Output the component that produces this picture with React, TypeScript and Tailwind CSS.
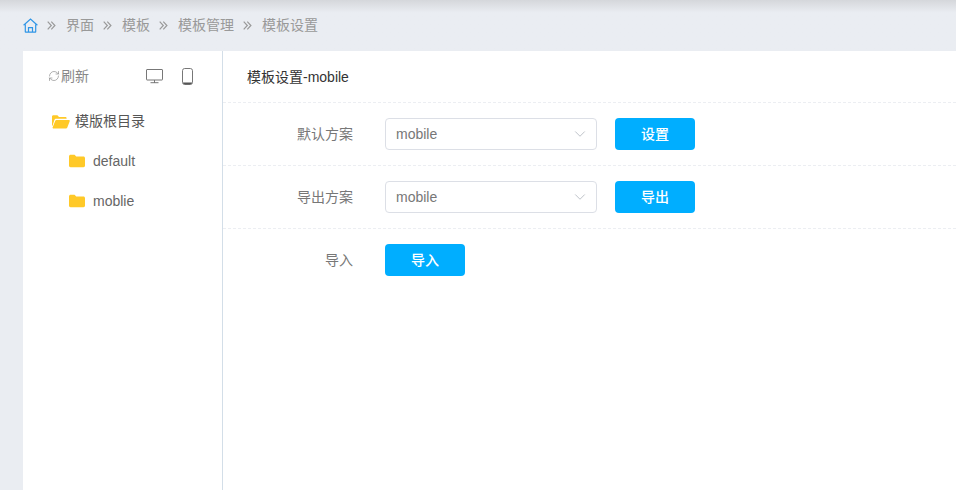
import { ChevronDown, RefreshCw } from 'lucide-react';

const crumbs = ['界面', '模板', '模板管理', '模板设置'];

function HomeIcon() {
  return (
    <svg width="15" height="15" viewBox="0 0 15 15" fill="none" stroke="#2f95e6" strokeWidth="1.200">
      <path d="M.6 7.200 7.500 1l6.900 6.200" />
      <path d="M2.300 6.200v7.600c0 .2.100.4.400.4h9.600c.3 0 .4-.2.400-.4V6.200" />
      <path d="M5.500 14V9.600h4V14" />
    </svg>
  );
}

function CrumbArrow() {
  return (
    <svg width="9" height="9" viewBox="0 0 9 9" fill="none" stroke="#999" strokeWidth="1.200" className="ml-[9px] mr-[10px]">
      <path d="M.7.7 4.300 4.500.7 8.300M4.300.7 7.900 4.500 4.300 8.300" />
    </svg>
  );
}

function FolderIcon() {
  return (
    <svg width="16" height="14" viewBox="0 0 16 14">
      <path d="M0 2.500C0 1.400.8.8 1.600.8h4l1.600 1.800h7.200c.9 0 1.600.7 1.600 1.600v7.400c0 .9-.7 1.600-1.600 1.600H1.600C.7 13.200 0 12.500 0 11.600z" fill="#ffc928" />
    </svg>
  );
}

function OpenFolderIcon() {
  return (
    <svg width="18" height="14" viewBox="0 0 18 14">
      <path d="M0 1.600C0 .8.600.2 1.400.2h4l1.600 1.800h6.400c.7 0 1.200.5 1.200 1.200v.6H4.200c-.9 0-1.500.5-1.800 1.200L.6 10.600 0 11z" fill="#ffc928" />
      <path d="M4.400 5h12.400c.7 0 1.100.6.900 1.200l-2.400 6.200c-.2.6-.7 1-1.400 1H1.200c-.5 0-.8-.4-.6-.9l2.600-6.500C3.400 5.400 3.900 5 4.400 5z" fill="#ffc928" />
    </svg>
  );
}

function MonitorIcon() {
  return (
    <svg width="17" height="15" viewBox="0 0 17 15" fill="none" stroke="#777" strokeWidth="1">
      <rect x="0.500" y="0.500" width="16" height="10.500" rx="0.500" />
      <path d="M8.500 11v3M4.500 13.700h8" />
    </svg>
  );
}

function PhoneIcon() {
  return (
    <svg width="11" height="17" viewBox="0 0 11 17" fill="none">
      <rect x="0.500" y="0.500" width="10" height="16" rx="2.200" stroke="#777" strokeWidth="1" />
      <path d="M1 14.600h9c0 .9-.7 1.600-1.500 1.600h-6c-.8 0-1.500-.7-1.500-1.600z" fill="#555" />
    </svg>
  );
}

function Row({ label, action, select }: { label: string; action: string; select?: boolean }) {
  return (
    <div className="flex h-[63px] items-center border-b border-dashed border-[#eceef2] pl-[24px] last:border-transparent">
      <div className="w-[106px] text-right text-[14px] text-[#777]">{label}</div>
      <div className="ml-[32px] flex items-center gap-[18px]">
        {select && (
          <div className="flex h-[32px] w-[212px] items-center justify-between rounded-[4px] border border-[#dcdfe6] pl-[10px] pr-[7px] text-[14px] text-[#777]">
            <span>mobile</span>
            <ChevronDown size={18} strokeWidth={1} className="text-[#a8adb6]" />
          </div>
        )}
        <button className="h-[32px] w-[80px] rounded-[4px] bg-[#00aeff] text-[14px] font-medium text-white">{action}</button>
      </div>
    </div>
  );
}

export default function App() {
  return (
    <div className="flex h-[490px] w-[956px] flex-col overflow-hidden bg-[#eaedf2] font-['Liberation_Sans','Noto_Sans_CJK_SC',sans-serif]">
      <div className="flex h-[51px] items-center bg-gradient-to-b from-[#d5d7db] via-[#eaedf2] via-[25%] to-[#eaedf2] pl-[23px] text-[14px] text-[#999]">
        <HomeIcon />
        {crumbs.map((c) => (
          <span key={c} className="flex items-center">
            <CrumbArrow />
            {c}
          </span>
        ))}
      </div>
      <div className="ml-[23px] flex flex-1 bg-white">
        <aside className="w-[200px] border-r border-[#d3dee8]">
          <div className="flex h-[50px] items-center pl-[25px] text-[14px] text-[#888]">
            <RefreshCw size={12} strokeWidth={1.300} className="text-[#888]" />
            <span className="ml-[1px]">刷新</span>
            <span className="ml-[57px]"><MonitorIcon /></span>
            <span className="ml-[19px]"><PhoneIcon /></span>
          </div>
          <div className="flex h-[40px] items-center pl-[29px] pt-[1px] text-[14px] text-[#555]">
            <OpenFolderIcon />
            <span className="ml-[5px]">模版根目录</span>
          </div>
          {['default', 'moblie'].map((name) => (
            <div key={name} className="flex h-[40px] items-center pl-[46px] text-[14px] text-[#666]">
              <FolderIcon />
              <span className="ml-[8px]">{name}</span>
            </div>
          ))}
        </aside>
        <main className="flex-1">
          <div className="flex h-[52px] items-center border-b border-dashed border-[#eceef2] pl-[24px] pt-[1px] text-[14px] text-[#333]">
            模板设置-mobile
          </div>
          <Row label="默认方案" action="设置" select />
          <Row label="导出方案" action="导出" select />
          <Row label="导入" action="导入" />
        </main>
      </div>
    </div>
  );
}
